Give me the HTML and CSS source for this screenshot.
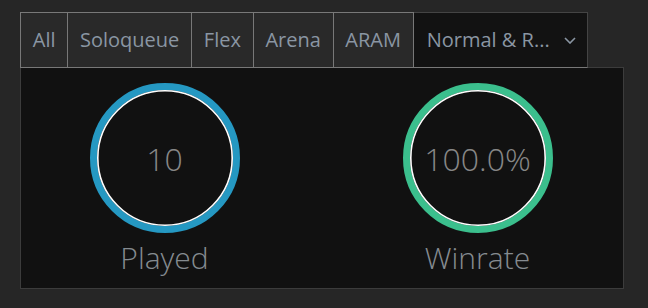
FILE: index.html
```html
<!DOCTYPE html>
<html lang="en">
<head>
    <meta charset="UTF-8" />
    <meta name="viewport" content="width=device-width, initial-scale=1.0" />
    <title>Queue stats</title>
    <link rel="stylesheet" href="styles.css">
</head>
<body>
    <div class="stats">
        <div class="tabs">
            <button class="tab">All</button>
            <button class="tab">Soloqueue</button>
            <button class="tab">Flex</button>
            <button class="tab">Arena</button>
            <button class="tab">ARAM</button>
            <button class="tab active">
                Normal &amp; R...
                <svg class="chevron" width="12" height="7" viewBox="0 0 12 7">
                    <path d="M1 1 L6 6 L11 1" fill="none" stroke="#8a96a3" stroke-width="1.6" />
                </svg>
            </button>
        </div>
        <div class="panel">
            <div class="stat">
                <div class="ring">
                    <svg width="150" height="150" viewBox="0 0 150 150">
                        <circle cx="75" cy="75" r="71.5" fill="none" stroke="#2598c2" stroke-width="7" />
                        <circle cx="75" cy="75" r="67.2" fill="none" stroke="#ffffff" stroke-width="1.6" />
                    </svg>
                    <span class="value">10</span>
                </div>
                <div class="label">Played</div>
            </div>
            <div class="stat">
                <div class="ring">
                    <svg width="150" height="150" viewBox="0 0 150 150">
                        <circle cx="75" cy="75" r="71.5" fill="none" stroke="#3bbf8d" stroke-width="7" />
                        <circle cx="75" cy="75" r="67.2" fill="none" stroke="#ffffff" stroke-width="1.6" />
                    </svg>
                    <span class="value">100.0%</span>
                </div>
                <div class="label">Winrate</div>
            </div>
        </div>
    </div>
</body>
</html>
```

FILE: styles.css
```css
* {
    margin: 0;
    padding: 0;
    box-sizing: border-box;
    font-family: 'Open Sans', sans-serif;
}

body {
    background-color: #262626;
    padding: 12px 24px 0 20px;
}

.stats {
    width: 604px;
}

.tabs {
    display: flex;
    position: relative;
    z-index: 1;
    margin-bottom: -1px;
}

.tab {
    display: flex;
    align-items: center;
    height: 56px;
    padding: 0 11.75px 2px 11.75px;
    border: 1px solid #787878;
    border-left: none;
    background: #292929;
    color: #8a96a3;
    font-size: 20px;
    cursor: pointer;
}

.tab:first-child {
    border-left: 1px solid #787878;
}

.tab.active {
    background: #121212;
    border-top-color: #444;
    border-right-color: #444;
    padding-left: 13px;
}

.chevron {
    margin-left: 14px;
    margin-top: 2px;
}

.panel {
    display: flex;
    justify-content: center;
    gap: 163px;
    height: 222px;
    padding-top: 15px;
    padding-right: 2px;
    background: #111111;
    border: 1px solid #3c3c3c;
}

.stat {
    display: flex;
    flex-direction: column;
    align-items: center;
}

.ring {
    width: 150px;
    height: 150px;
    display: flex;
    align-items: center;
    justify-content: center;
    position: relative;
}

.ring svg {
    position: absolute;
    top: 0;
    left: 0;
}

.value {
    font-size: 32px;
    font-weight: 300;
    color: #878787;
}

.label {
    margin-top: 4px;
    font-size: 30px;
    font-weight: 300;
    color: #858b90;
}
```
